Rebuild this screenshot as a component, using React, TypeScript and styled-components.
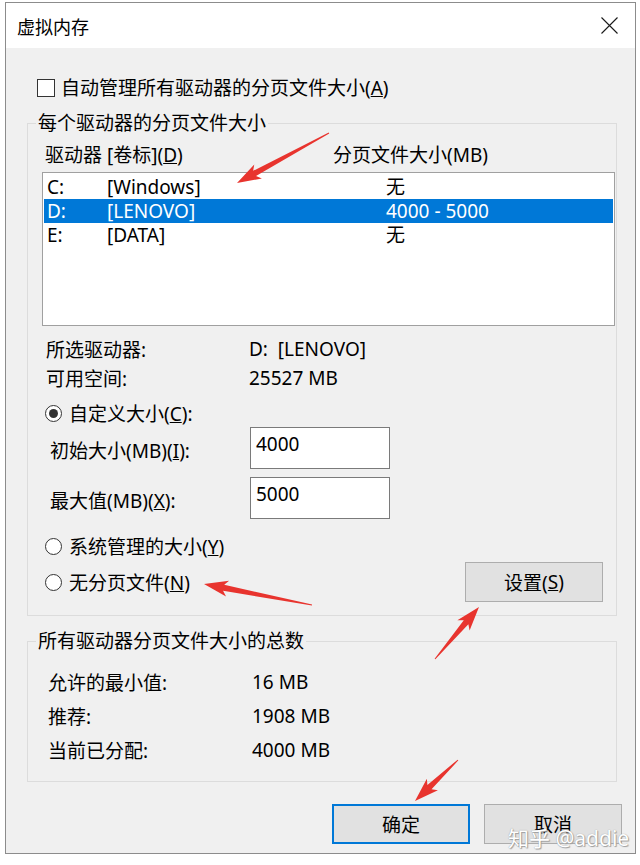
import * as React from 'react';
import {createGlobalStyle, styled} from 'styled-components';

const GlobalStyle = createGlobalStyle`
    html, body {
        margin: 0;
        padding: 0;
        background: #ffffff;
    }
    body {
        font-family: "Noto Sans", "Noto Sans CJK SC", sans-serif;
        font-size: 19px;
        color: #000000;
    }
`;

const Page = styled.div`
    position: relative;
    width: 640px;
    height: 865px;
    padding-top: 2px;
    box-sizing: border-box;
`;

const Window = styled.div`
    margin-left: 5px;
    width: 631px;
    height: 852px;
    border: 1px solid #8c8c8c;
    box-sizing: border-box;
    background: #f0f0f0;
    display: flex;
    flex-direction: column;
`;

const TitleBar = styled.div`
    height: 45px;
    background: #ffffff;
    display: flex;
    align-items: center;
    justify-content: space-between;
    padding: 0 17px 0 11px;
    font-size: 18px;
`;

const CloseIcon = styled.svg`
    width: 17px;
    height: 17px;
`;

const CheckRow = styled.label`
    margin: 30px 0 0 31px;
    height: 20px;
    display: flex;
    align-items: center;
    gap: 6px;
    line-height: 20px;
`;

const CheckBox = styled.span`
    width: 16px;
    height: 16px;
    border: 1px solid #333333;
    background: #ffffff;
`;

const Group = styled.fieldset<{$top: number; $height: number}>`
    margin: ${p => p.$top}px 18px 0 21px;
    height: ${p => p.$height}px;
    padding: 0 1px 0 14px;
    border: 1px solid #dcdcdc;
    box-sizing: border-box;
    min-width: 0;
`;

const Legend = styled.legend`
    padding: 0 2px;
    margin-left: -6px;
    line-height: 24px;
    background: #f0f0f0;
`;

const HeaderRow = styled.div`
    height: 37px;
    display: flex;
    align-items: center;
    padding: 1px 0 0 3px;
    box-sizing: border-box;
`;

const HeaderCell = styled.span<{$width?: number}>`
    width: ${p => (p.$width ? `${p.$width}px` : 'auto')};
`;

const ListBox = styled.div`
    height: 154px;
    border: 1px solid #a0a0a0;
    background: #ffffff;
    padding: 2px 1px;
    box-sizing: border-box;
`;

const ListRow = styled.div<{$selected?: boolean}>`
    height: 24px;
    line-height: 24px;
    display: flex;
    align-items: center;
    padding-left: 3px;
    background: ${p => (p.$selected ? '#0078d7' : 'transparent')};
    color: ${p => (p.$selected ? '#ffffff' : '#000000')};
`;

const Cell = styled.span<{$width: number}>`
    width: ${p => p.$width}px;
    white-space: nowrap;
`;

const InfoRow = styled.div<{$top?: number}>`
    height: 29px;
    margin-top: ${p => p.$top ?? 0}px;
    display: flex;
    align-items: center;
    padding-left: 4px;
`;

const InfoLabel = styled.span<{$width: number}>`
    width: ${p => p.$width}px;
`;

const RadioRow = styled.div<{$top: number; $height?: number}>`
    margin-top: ${p => p.$top}px;
    margin-right: 12px;
    height: ${p => p.$height ?? 26}px;
    display: flex;
    align-items: center;
    justify-content: space-between;
    padding-left: 3px;
`;

const RadioLabel = styled.span`
    display: flex;
    align-items: center;
    gap: 7px;
`;

const Radio = styled.span<{$checked?: boolean}>`
    width: 17px;
    height: 17px;
    border: 1px solid #333333;
    border-radius: 50%;
    background: #ffffff;
    box-sizing: border-box;
    display: flex;
    align-items: center;
    justify-content: center;

    &::after {
        content: '';
        width: 9px;
        height: 9px;
        border-radius: 50%;
        background: ${p => (p.$checked ? '#333333' : 'transparent')};
    }
`;

const FieldRow = styled.div<{$top: number}>`
    margin-top: ${p => p.$top}px;
    height: 42px;
    display: flex;
    align-items: center;
    padding-left: 8px;
`;

const FieldLabel = styled.span`
    width: 200px;
    padding-top: 4px;
`;

const TextBox = styled.div`
    width: 140px;
    height: 42px;
    border: 1px solid #7a7a7a;
    background: #ffffff;
    box-sizing: border-box;
    padding: 4px 0 0 5px;
    line-height: 24px;
`;

const Button = styled.div<{$default?: boolean}>`
    width: 138px;
    height: 40px;
    box-sizing: border-box;
    display: flex;
    align-items: center;
    justify-content: center;
    background: #e1e1e1;
    border: ${p => (p.$default ? '2px solid #0078d7' : '1px solid #adadad')};
`;

const TotalRow = styled.div<{$top?: number}>`
    height: 34px;
    margin-top: ${p => p.$top ?? 0}px;
    display: flex;
    align-items: center;
    padding-left: 6px;
`;

const ButtonBar = styled.div`
    margin: 22px 13px 0 0;
    display: flex;
    justify-content: flex-end;
    gap: 14px;
`;

const Overlay = styled.svg`
    position: absolute;
    left: 0;
    top: 0;
    pointer-events: none;
`;

const Watermark = styled.div`
    position: absolute;
    left: 508px;
    top: 824px;
    font-size: 21px;
    line-height: 28px;
    color: #ffffff;
    text-shadow: 0 0 1px #8a8a8a, 1px 1px 1px #a0a0a0;
`;

type Pt = [number, number];

const arrows: Array<{tail: Pt; tip: Pt}> = [
    {tail: [329, 133], tip: [237, 183]},
    {tail: [312, 605], tip: [204, 584]},
    {tail: [435, 659], tip: [479, 607]},
    {tail: [458, 760], tip: [415, 801]},
];

function arrowPoints(tail: Pt, tip: Pt) {
    const dx = tip[0] - tail[0];
    const dy = tip[1] - tail[1];
    const len = Math.hypot(dx, dy);
    const ux = dx / len;
    const uy = dy / len;
    const nx = -uy;
    const ny = ux;
    const head = 24;
    const headHalf = 8;
    const neckHalf = 3;
    const bx = tip[0] - ux * head;
    const by = tip[1] - uy * head;
    const at = (x: number, y: number, w: number) => `${x + nx * w},${y + ny * w}`;
    return [
        at(tail[0], tail[1], 0.5),
        at(bx + ux * 4, by + uy * 4, neckHalf),
        at(bx, by, headHalf),
        `${tip[0]},${tip[1]}`,
        at(bx, by, -headHalf),
        at(bx + ux * 4, by + uy * 4, -neckHalf),
        at(tail[0], tail[1], -0.5),
    ].join(' ');
}

const drives = [
    {letter: 'C:', label: '[Windows]', size: '无'},
    {letter: 'D:', label: '[LENOVO]', size: '4000 - 5000', selected: true},
    {letter: 'E:', label: '[DATA]', size: '无'},
];

export default function App() {
    return (
        <Page>
            <GlobalStyle />
            <Window>
                <TitleBar>
                    <span>虚拟内存</span>
                    <CloseIcon viewBox="0 0 17 17">
                        <path d="M0.5 0.5 L16.5 16.5 M16.5 0.5 L0.5 16.5" stroke="#1a1a1a" strokeWidth="1.1" />
                    </CloseIcon>
                </TitleBar>

                <CheckRow>
                    <CheckBox />
                    <span>
                        自动管理所有驱动器的分页文件大小(<u>A</u>)
                    </span>
                </CheckRow>

                <Group $top={13} $height={505}>
                    <Legend>每个驱动器的分页文件大小</Legend>
                    <HeaderRow>
                        <HeaderCell $width={288}>
                            驱动器 [卷标](<u>D</u>)
                        </HeaderCell>
                        <HeaderCell>分页文件大小(MB)</HeaderCell>
                    </HeaderRow>
                    <ListBox>
                        {drives.map(d => (
                            <ListRow key={d.letter} $selected={d.selected}>
                                <Cell $width={60}>{d.letter}</Cell>
                                <Cell $width={279}>{d.label}</Cell>
                                <Cell $width={150}>{d.size}</Cell>
                            </ListRow>
                        ))}
                    </ListBox>

                    <InfoRow $top={8}>
                        <InfoLabel $width={203}>所选驱动器:</InfoLabel>
                        <span>D:&nbsp;&nbsp;[LENOVO]</span>
                    </InfoRow>
                    <InfoRow>
                        <InfoLabel $width={203}>可用空间:</InfoLabel>
                        <span>25527 MB</span>
                    </InfoRow>

                    <RadioRow $top={8}>
                        <RadioLabel>
                            <Radio $checked />
                            <span>
                                自定义大小(<u>C</u>):
                            </span>
                        </RadioLabel>
                    </RadioRow>
                    <FieldRow $top={1}>
                        <FieldLabel>
                            初始大小(MB)(<u>I</u>):
                        </FieldLabel>
                        <TextBox>4000</TextBox>
                    </FieldRow>
                    <FieldRow $top={8}>
                        <FieldLabel>
                            最大值(MB)(<u>X</u>):
                        </FieldLabel>
                        <TextBox>5000</TextBox>
                    </FieldRow>

                    <RadioRow $top={14}>
                        <RadioLabel>
                            <Radio />
                            <span>
                                系统管理的大小(<u>Y</u>)
                            </span>
                        </RadioLabel>
                    </RadioRow>
                    <RadioRow $top={3} $height={40}>
                        <RadioLabel>
                            <Radio />
                            <span>
                                无分页文件(<u>N</u>)
                            </span>
                        </RadioLabel>
                        <Button>
                            设置(<u>S</u>)
                        </Button>
                    </RadioRow>
                </Group>

                <Group $top={13} $height={153}>
                    <Legend>所有驱动器分页文件大小的总数</Legend>
                    <TotalRow $top={12}>
                        <InfoLabel $width={204}>允许的最小值:</InfoLabel>
                        <span>16 MB</span>
                    </TotalRow>
                    <TotalRow>
                        <InfoLabel $width={204}>推荐:</InfoLabel>
                        <span>1908 MB</span>
                    </TotalRow>
                    <TotalRow>
                        <InfoLabel $width={204}>当前已分配:</InfoLabel>
                        <span>4000 MB</span>
                    </TotalRow>
                </Group>

                <ButtonBar>
                    <Button $default>确定</Button>
                    <Button>取消</Button>
                </ButtonBar>
            </Window>

            <Watermark>知乎 @addie</Watermark>

            <Overlay width={640} height={865} viewBox="0 0 640 865">
                {arrows.map((a, i) => (
                    <polygon key={i} points={arrowPoints(a.tail, a.tip)} fill="#e8342e" />
                ))}
            </Overlay>
        </Page>
    );
}
